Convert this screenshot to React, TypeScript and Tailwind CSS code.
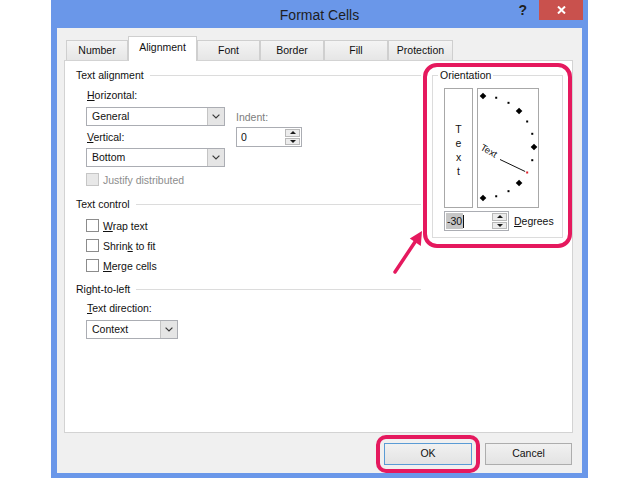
import React from "react";

const tabs = [
    {name: "Number", w: "w-[62px]"},
    {name: "Alignment", w: "w-[69px]", active: true},
    {name: "Font", w: "w-[63px]"},
    {name: "Border", w: "w-[64px]"},
    {name: "Fill", w: "w-[64px]"},
    {name: "Protection", w: "w-[65px]"},
];

function Chevron() {
    return (
        <svg width="8" height="5" viewBox="0 0 8 5">
            <path d="M0.6 0.6 L4 4 L7.4 0.6" fill="none" stroke="#3a3a3a" strokeWidth="1.2"/>
        </svg>
    );
}

function Select({label, w}: { label: string; w: string }) {
    return (
        <div className={`${w} h-[19px] flex border border-[#abadb3] bg-white`}>
            <span className="flex-1 pl-[5px] leading-[17px]">{label}</span>
            <span className="w-[17px] flex items-center justify-center bg-[#e5e5e5] border-l border-[#c4c4c4]">
                <Chevron/>
            </span>
        </div>
    );
}

function SpinButtons() {
    return (
        <div className="flex flex-col gap-px w-[15px] py-[1px] mr-[1px]">
            <span className="flex-1 flex items-center justify-center bg-[#ececec] border border-[#b9b9b9]">
                <svg width="6" height="3" viewBox="0 0 6 3"><path d="M0 3 L3 0 L6 3Z" fill="#1a1a1a"/></svg>
            </span>
            <span className="flex-1 flex items-center justify-center bg-[#ececec] border border-[#b9b9b9]">
                <svg width="6" height="3" viewBox="0 0 6 3"><path d="M0 0 L3 3 L6 0Z" fill="#1a1a1a"/></svg>
            </span>
        </div>
    );
}

function Check({children, disabled}: { children: React.ReactNode; disabled?: boolean }) {
    return (
        <div className="flex items-center h-[13px] ml-[10px]">
            <span
                className={`w-[13px] h-[13px] border ${disabled ? "border-[#c6c6c6] bg-[#e8e8e8]" : "border-[#8c8c8c] bg-white"}`}/>
            <span className={`ml-[4px] leading-[14px] ${disabled ? "text-[#8d8d8d]" : ""}`}>{children}</span>
        </div>
    );
}

function Group({title, className}: { title: string; className?: string }) {
    return (
        <div className={`flex items-center h-[14px] ${className ?? ""}`}>
            <span className="leading-[14px]">{title}</span>
            <span className="flex-1 h-px bg-[#dcdcdc] ml-[6px]"/>
        </div>
    );
}

// points on the orientation dial, centre (5,58), radius 51
function Dial() {
    const cx = 5, cy = 58, r = 51;
    const pt = (deg: number) => {
        const a = (deg * Math.PI) / 180;
        return [cx + r * Math.cos(a), cy - r * Math.sin(a)];
    };
    const big = [90, 45, 0, -45, -90];
    const small = [75, 60, 30, 15, -15, -60, -75];
    const red = pt(-30);
    return (
        <svg width="60" height="118" viewBox="0 0 60 118">
            {big.map((d) => {
                const [x, y] = pt(d);
                return (
                    <polygon key={d} points={`${x},${y - 3.3} ${x + 3.3},${y} ${x},${y + 3.3} ${x - 3.3},${y}`}
                             fill="#000"/>
                );
            })}
            {small.map((d) => {
                const [x, y] = pt(d);
                return <rect key={d} x={x - 1} y={y - 1} width="2" height="2" fill="#000"/>;
            })}
            <text x="3" y="58" transform="rotate(30 3 58)" fontSize="9.5" dominantBaseline="middle"
                  fontFamily="Liberation Sans, Arial, sans-serif" fill="#111">Text</text>
            <line x1="22" y1="70.5" x2={red[0] - 2} y2={red[1] - 1} stroke="#111" strokeWidth="1"/>
            <rect x={red[0] - 1} y={red[1] - 1} width="2" height="2" fill="#e0202a"/>
        </svg>
    );
}

export default function App() {
    return (
        <div className="relative w-[640px] h-[480px] bg-white overflow-hidden font-['Liberation_Sans',Arial,sans-serif] text-[10.5px] text-[#111]">
            <div className="ml-[51px] w-[537px] h-[478px] bg-[#6a97e9] flex flex-col">
                {/* title bar */}
                <div className="h-[28px] grid grid-cols-[1fr_auto_1fr]">
                    <div/>
                    <span className="text-[14px] leading-[28px] text-[#1e1e1e] pt-[1px]">Format Cells</span>
                    <div className="flex justify-end items-start pr-[5px]">
                        <span className="text-[14px] font-bold leading-[20px] text-[#1f1f1f] mr-[12px]">?</span>
                        <span className="w-[44px] h-[20px] bg-[#c9514d] flex items-center justify-center">
                            <svg width="9" height="8" viewBox="0 0 9 8">
                                <path d="M1 0.5 L8 7.5 M8 0.5 L1 7.5" stroke="#fff" strokeWidth="2"/>
                            </svg>
                        </span>
                    </div>
                </div>

                {/* client area */}
                <div className="mx-[6px] mb-[5px] flex-1 bg-[#f0f0f0] pt-[8px] pl-[7px] pr-[10px] flex flex-col">
                    <div className="h-[24px] flex items-end pl-[2px]">
                        {tabs.map((t) =>
                            t.active ? (
                                <div key={t.name}
                                     className={`${t.w} h-[25px] -mb-px relative z-10 bg-white border border-b-0 border-[#cfcfcf] flex items-center justify-center pb-[2px]`}>
                                    {t.name}
                                </div>
                            ) : (
                                <div key={t.name}
                                     className={`${t.w} h-[20px] bg-linear-to-b from-[#f4f4f4] to-[#e6e6e6] border border-b-0 border-[#cfcfcf] flex items-center justify-center`}>
                                    {t.name}
                                </div>
                            )
                        )}
                    </div>

                    <div className="w-[509px] h-[373px] border border-[#d3d3d3] bg-white flex">
                        {/* left column */}
                        <div className="ml-[11px] w-[345px] pt-[7px] flex flex-col">
                            <Group title="Text alignment"/>
                            <span className="mt-[6px] ml-[11px] leading-[14px]"><u>H</u>orizontal:</span>
                            <div className="flex mt-[5px] ml-[10px]">
                                <div className="flex flex-col">
                                    <Select label="General" w="w-[139px]"/>
                                    <span className="mt-[4px] ml-[1px] leading-[14px]"><u>V</u>ertical:</span>
                                    <div className="mt-[4px]"><Select label="Bottom" w="w-[139px]"/></div>
                                </div>
                                <div className="ml-[11px] flex flex-col">
                                    <span className="mt-[3px] leading-[14px] text-[#7d7d7d]">Indent:</span>
                                    <div className="mt-[3px] w-[66px] h-[20px] flex border border-[#abadb3] bg-white">
                                        <span className="flex-1 pl-[4px] leading-[18px]">0</span>
                                        <SpinButtons/>
                                    </div>
                                </div>
                            </div>
                            <div className="mt-[6px]"><Check disabled>Justify distributed</Check></div>

                            <Group title="Text control" className="mt-[11px]"/>
                            <div className="mt-[8px]"><Check><u>W</u>rap text</Check></div>
                            <div className="mt-[7px]"><Check>Shrin<u>k</u> to fit</Check></div>
                            <div className="mt-[7px]"><Check><u>M</u>erge cells</Check></div>

                            <Group title="Right-to-left" className="mt-[10px]"/>
                            <span className="mt-[5px] ml-[11px] leading-[14px]"><u>T</u>ext direction:</span>
                            <div className="mt-[5px] ml-[10px]"><Select label="Context" w="w-[92px]"/></div>
                        </div>

                        {/* orientation */}
                        <fieldset className="ml-[11px] mt-[7px] w-[131px] h-[170px] border border-[#dcdcdc] pl-[11px]">
                            <legend className="-ml-[6px] px-[2px] leading-[14px]">Orientation</legend>
                            <div className="mt-[6px] flex gap-[4px]">
                                <div className="w-[29px] h-[120px] border border-[#a8a8a8] flex flex-col items-center justify-center leading-[14px] pt-[3px]">
                                    <span>T</span>
                                    <span>e</span>
                                    <span>x</span>
                                    <span>t</span>
                                </div>
                                <div className="w-[62px] h-[120px] border border-[#a8a8a8]">
                                    <Dial/>
                                </div>
                            </div>
                            <div className="mt-[3px] flex items-center">
                                <div className="w-[65px] h-[20px] flex border border-[#abadb3] bg-white">
                                    <div className="flex-1 flex items-center pl-[1px]">
                                        <span className="bg-[#c6c6c6] leading-[16px] px-[1px]">-30</span>
                                        <span className="w-px h-[13px] bg-[#111]"/>
                                    </div>
                                    <SpinButtons/>
                                </div>
                                <span className="ml-[5px] leading-[14px]"><u>D</u>egrees</span>
                            </div>
                        </fieldset>
                    </div>

                    <div className="mt-[10px] flex justify-end gap-[13px]">
                        <button className="w-[88px] h-[22px] border border-[#5a9bd5] bg-linear-to-b from-[#f1f1f1] to-[#e3e3e3]">
                            OK
                        </button>
                        <button className="w-[87px] h-[22px] border border-[#adadad] bg-linear-to-b from-[#f1f1f1] to-[#e3e3e3]">
                            Cancel
                        </button>
                    </div>
                </div>
            </div>

            {/* annotations */}
            <div className="absolute left-[423px] top-[63px] w-[149px] h-[185px] border-4 border-[#e5195e] rounded-[14px]"/>
            <div className="absolute left-[376px] top-[435px] w-[104px] h-[38px] border-4 border-[#e5195e] rounded-[10px]"/>
            <svg className="absolute left-0 top-0" width="640" height="480" viewBox="0 0 640 480">
                <line x1="395" y1="272" x2="415" y2="242" stroke="#e5195e" strokeWidth="3.5" strokeLinecap="round"/>
                <polygon points="422,231 420.8,246 409.8,238.6" fill="#e5195e"/>
            </svg>
        </div>
    );
}
